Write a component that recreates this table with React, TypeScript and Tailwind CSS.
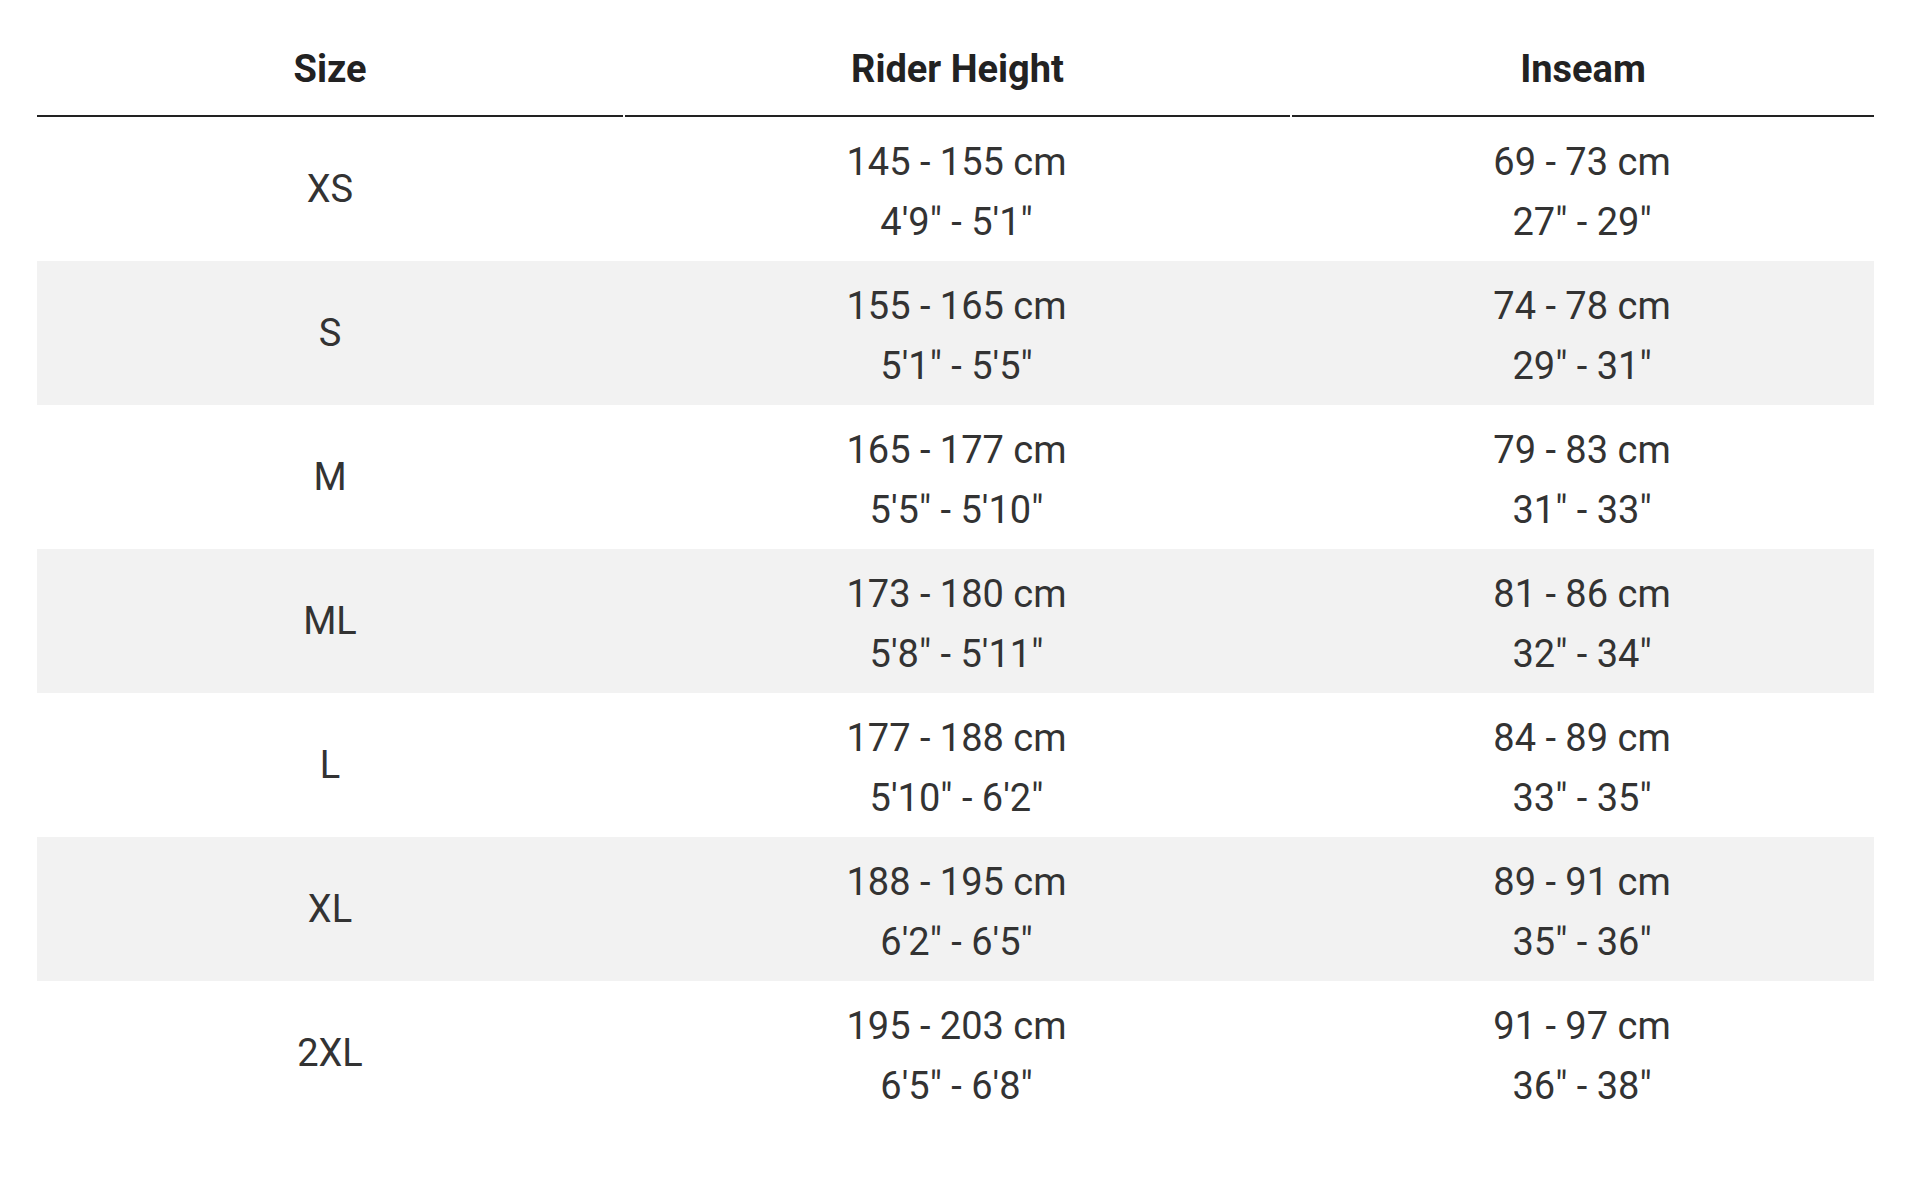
const rows = [
  { size: "XS", height: ["145 - 155 cm", "4'9\" - 5'1\""], inseam: ["69 - 73 cm", "27\" - 29\""] },
  { size: "S", height: ["155 - 165 cm", "5'1\" - 5'5\""], inseam: ["74 - 78 cm", "29\" - 31\""] },
  { size: "M", height: ["165 - 177 cm", "5'5\" - 5'10\""], inseam: ["79 - 83 cm", "31\" - 33\""] },
  { size: "ML", height: ["173 - 180 cm", "5'8\" - 5'11\""], inseam: ["81 - 86 cm", "32\" - 34\""] },
  { size: "L", height: ["177 - 188 cm", "5'10\" - 6'2\""], inseam: ["84 - 89 cm", "33\" - 35\""] },
  { size: "XL", height: ["188 - 195 cm", "6'2\" - 6'5\""], inseam: ["89 - 91 cm", "35\" - 36\""] },
  { size: "2XL", height: ["195 - 203 cm", "6'5\" - 6'8\""], inseam: ["91 - 97 cm", "36\" - 38\""] },
];

const cols = "grid grid-cols-[586px_667px_584px]";

export default function App() {
  return (
    <div className="min-h-[1191px] bg-white pl-[37px] font-['Roboto',sans-serif] text-[38px] leading-[60px] text-[#333]">
      <div className="w-[1837px]">
        <div className={`${cols} font-bold text-[#222]`}>
          {["Size", "Rider Height", "Inseam"].map((h, i) => (
            <div
              key={h}
              className={`border-b-2 border-[#222] pt-[39px] pb-[16px] text-center ${i > 0 ? "ml-[2px]" : ""}`}
            >
              {h}
            </div>
          ))}
        </div>
        {rows.map((r, i) => (
          <div
            key={r.size}
            className={`${cols} h-[144px] items-center text-center ${i % 2 === 1 ? "bg-[#f2f2f2]" : ""}`}
          >
            <div>{r.size}</div>
            <div className="pt-[5px]">
              <div>{r.height[0]}</div>
              <div>{r.height[1]}</div>
            </div>
            <div className="pt-[5px]">
              <div>{r.inseam[0]}</div>
              <div>{r.inseam[1]}</div>
            </div>
          </div>
        ))}
      </div>
    </div>
  );
}
